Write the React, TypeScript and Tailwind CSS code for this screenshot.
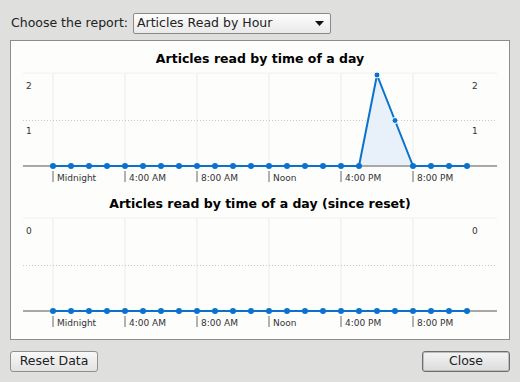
import React from "react";

const hours = Array.from({ length: 24 }, (_, i) => i);
const ticks = [
  { h: 0, label: "Midnight" },
  { h: 4, label: "4:00 AM" },
  { h: 8, label: "8:00 AM" },
  { h: 12, label: "Noon" },
  { h: 16, label: "4:00 PM" },
  { h: 20, label: "8:00 PM" },
];

const px = (h: number) => 42 + h * 18;

function Chart({
  title,
  data,
  max,
  labels,
}: {
  title: string;
  data: number[];
  max: number;
  labels: { v: string; y: number }[];
}) {
  const base = 125;
  const py = (v: number) => (max === 0 ? base : base - (v / max) * 91);
  const pts = data.map((v, i) => `${px(i)},${py(v)}`).join(" ");
  const area = `${px(0)},${base} ${pts} ${px(23)},${base}`;
  return (
    <svg width={498} height={145} className="block" style={{ fontFamily: '"DejaVu Sans", Verdana, sans-serif' }}>
      <text x={249} y={22} textAnchor="middle" fontSize={12.5} fontWeight="bold" fill="#000">
        {title}
      </text>
      <line x1={12} y1={32} x2={486} y2={32} stroke="#f0f0ee" strokeWidth={1} />
      {ticks.map((t) => (
        <line key={t.h} x1={px(t.h)} y1={32} x2={px(t.h)} y2={125} stroke="#f0f0ee" strokeWidth={1.5} />
      ))}
      <line x1={12} y1={79.5} x2={486} y2={79.5} stroke="#c8c8c8" strokeWidth={1} strokeDasharray="1 2" />
      {labels.map((l) => (
        <React.Fragment key={l.v}>
          <text x={15} y={l.y} fontSize={9} fill="#333">{l.v}</text>
          <text x={461} y={l.y} fontSize={9} fill="#333">{l.v}</text>
        </React.Fragment>
      ))}
      <polygon points={area} fill="#e8f0fa" />
      <line x1={12} y1={base} x2={486} y2={base} stroke="#a8a8a8" strokeWidth={2} />
      <polyline points={pts} fill="none" stroke="#0a72cc" strokeWidth={2} />
      {data.map((v, i) => (
        <circle key={i} cx={px(i)} cy={py(v)} r={3} fill="#0a72cc" stroke={v > 0 ? "#fff" : "none"} strokeWidth={1} />
      ))}
      {ticks.map((t) => (
        <React.Fragment key={t.h}>
          <line x1={px(t.h)} y1={130} x2={px(t.h)} y2={141} stroke="#999" strokeWidth={1.5} />
          <text x={px(t.h) + 4} y={140} fontSize={9} fill="#333">{t.label}</text>
        </React.Fragment>
      ))}
    </svg>
  );
}

export default function App() {
  const today = hours.map((h) => (h === 18 ? 2 : h === 19 ? 1 : 0));
  const reset = hours.map(() => 0);
  return (
    <div className="w-[520px] h-[382px] bg-[#dfdfdd] text-[12.5px] text-[#222] font-['DejaVu_Sans',Verdana,sans-serif] flex flex-col px-[10px]">
      <div className="flex items-center gap-[5px] h-[22px] mt-[12px]">
        <span className="pl-[1px]">Choose the report:</span>
        <div className="w-[198px] h-[21px] border border-[#8a8a8a] rounded-[2px] bg-gradient-to-b from-[#fdfdfd] to-[#e9e9e9] flex items-center justify-between pl-[3px] pr-[6px]">
          <span>Articles Read by Hour</span>
          <svg width="9" height="5" viewBox="0 0 9 5"><path d="M0 0h9L4.5 5z" fill="#111" /></svg>
        </div>
      </div>
      <div className="mt-[6px] h-[300px] border border-[#8c8c8c] bg-[#fdfdfc]">
        <Chart title="Articles read by time of a day" data={today} max={2} labels={[{ v: "2", y: 48 }, { v: "1", y: 93 }]} />
        <Chart title="Articles read by time of a day (since reset)" data={reset} max={0} labels={[{ v: "0", y: 48 }]} />
      </div>
      <div className="flex justify-between mt-[11px]">
        <button className="w-[88px] h-[21px] border border-[#8f8f8f] rounded-[3px] bg-gradient-to-b from-[#f8f8f8] to-[#e2e2e2]">
          Reset Data
        </button>
        <button className="w-[88px] h-[21px] border border-[#6e6e6e] rounded-[3px] bg-gradient-to-b from-[#f4f4f4] to-[#dcdcdc] shadow-[inset_0_0_0_1px_#bdbdbd]">
          Close
        </button>
      </div>
    </div>
  );
}
